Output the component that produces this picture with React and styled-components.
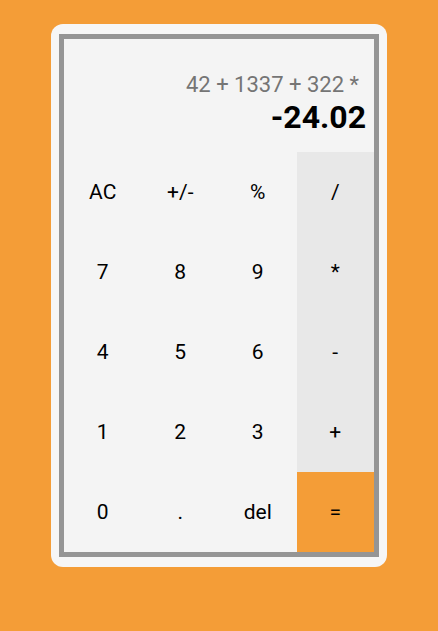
import React from "react";
import styled, { createGlobalStyle } from "styled-components";

const GlobalStyle = createGlobalStyle`
  body {
    margin: 0;
    background: #f49d37;
    font-family: "Roboto", "Liberation Sans", sans-serif;
  }
`;

const StyledPage = styled.div`
  display: flex;
  justify-content: center;
  align-items: flex-start;
  padding-top: 24px;
  min-height: 100vh;
  box-sizing: border-box;
`;

const StyledCard = styled.div`
  width: 336px;
  padding: 10px 8px;
  background: #f6f6f6;
  border-radius: 12px;
  box-sizing: border-box;
`;

const StyledCalculator = styled.div`
  border: 5px solid #959595;
  background: #f4f4f4;
`;

const StyledDisplay = styled.div`
  height: 113px;
  display: flex;
  flex-direction: column;
  justify-content: flex-end;
  align-items: flex-end;
  padding: 0 8px 17px 0;
  box-sizing: border-box;
`;

const StyledExpression = styled.div`
  font-size: 22px;
  line-height: 28px;
  color: #757575;
  margin-right: 7px;
`;

const StyledResult = styled.div`
  font-size: 32px;
  line-height: 36px;
  font-weight: 700;
  color: #000000;
`;

const StyledKeypad = styled.div`
  display: grid;
  grid-template-columns: repeat(4, 1fr);
  grid-auto-rows: 80px;
`;

const bgColors = {
  digit: "#f4f4f4",
  operator: "#e8e8e8",
  equals: "#f49d37",
};

const StyledKey = styled.button`
  border: none;
  margin: 0;
  padding: 0;
  font-family: "Roboto", "Liberation Sans", sans-serif;
  font-size: 21px;
  color: #000000;
  background: ${(props) => bgColors[props.kind]};
  cursor: pointer;
`;

const keys = [
  ["AC", "digit"],
  ["+/-", "digit"],
  ["%", "digit"],
  ["/", "operator"],
  ["7", "digit"],
  ["8", "digit"],
  ["9", "digit"],
  ["*", "operator"],
  ["4", "digit"],
  ["5", "digit"],
  ["6", "digit"],
  ["-", "operator"],
  ["1", "digit"],
  ["2", "digit"],
  ["3", "digit"],
  ["+", "operator"],
  ["0", "digit"],
  [".", "digit"],
  ["del", "digit"],
  ["=", "equals"],
];

function App() {
  return (
    <>
      <GlobalStyle />
      <StyledPage>
        <StyledCard>
          <StyledCalculator>
            <StyledDisplay>
              <StyledExpression>42 + 1337 + 322 *</StyledExpression>
              <StyledResult>-24.02</StyledResult>
            </StyledDisplay>
            <StyledKeypad>
              {keys.map(([label, kind]) => (
                <StyledKey key={label} kind={kind}>
                  {label}
                </StyledKey>
              ))}
            </StyledKeypad>
          </StyledCalculator>
        </StyledCard>
      </StyledPage>
    </>
  );
}

export default App;
